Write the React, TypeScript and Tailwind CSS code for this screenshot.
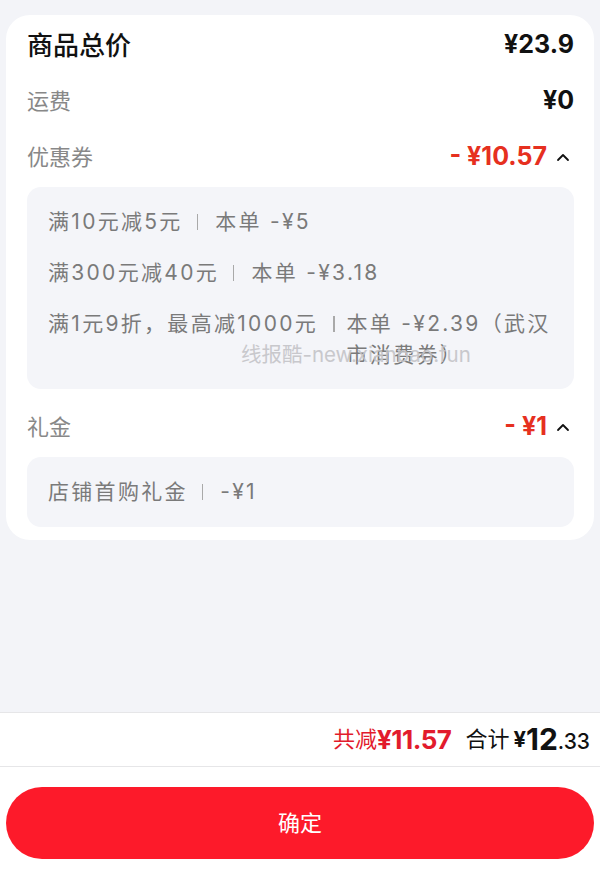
import React from "react";

function Chevron() {
  return (
    <svg width="14" height="10" viewBox="0 0 14 10" className="ml-[9px] mr-[4px]">
      <polyline points="2,8 7,3 12,8" fill="none" stroke="#111" strokeWidth="1.8" strokeLinecap="round" strokeLinejoin="round" />
    </svg>
  );
}

function Sep() {
  return <span className="ml-[14px] mr-[17px] inline-block h-[16px] w-[1.5px] shrink-0 bg-[#a9a9a9]" />;
}

export default function App() {
  const font = { fontFamily: 'Inter, "Noto Sans CJK SC", "Noto Sans", sans-serif' };
  return (
    <div className="flex h-[881px] w-[600px] flex-col bg-[#f3f4f8]" style={font}>
      <div className="flex-1 px-[6px] pt-[15px]">
        <div className="relative rounded-[24px] bg-white pb-[13px] pl-[21px] pr-[20px] pt-[2px]">
          <div className="flex h-[56px] items-center justify-between">
            <span className="text-[26px] font-medium text-[#111]">商品总价</span>
            <span className="text-[25px] font-bold text-[#111]">¥23.9</span>
          </div>
          <div className="flex h-[56px] items-center justify-between">
            <span className="text-[22px] text-[#888]">运费</span>
            <span className="text-[25px] font-bold text-[#111]">¥0</span>
          </div>
          <div className="flex h-[56px] items-center justify-between">
            <span className="text-[22px] text-[#888]">优惠券</span>
            <span className="flex items-center">
              <span className="text-[25px] font-bold text-[#e6301f]">-&nbsp;¥10.57</span>
              <Chevron />
            </span>
          </div>
          <div className="mt-[2px] flex flex-col gap-[20px] rounded-[14px] bg-[#f4f5f9] px-[21px] py-[19px] text-[21px] leading-[31px] tracking-[2.3px] text-[#7a7a7a]">
            <div className="flex items-center">
              <span className="whitespace-nowrap">满10元减5元</span>
              <Sep />
              <span className="whitespace-nowrap">本单 -¥5</span>
            </div>
            <div className="flex items-center">
              <span className="whitespace-nowrap">满300元减40元</span>
              <Sep />
              <span className="whitespace-nowrap">本单 -¥3.18</span>
            </div>
            <div className="flex items-start">
              <span className="whitespace-nowrap">满1元9折，最高减1000元</span>
              <span className="flex h-[31px] items-center">
                <span className="ml-[15px] mr-[12px] inline-block h-[16px] w-[1.5px] bg-[#a9a9a9]" />
              </span>
              <span className="whitespace-nowrap">
                本单 -¥2.39（武汉
                <br />
                市消费券）
              </span>
            </div>
          </div>
          <div className="mt-[10px] flex h-[56px] items-center justify-between">
            <span className="text-[22px] text-[#888]">礼金</span>
            <span className="flex items-center">
              <span className="text-[25px] font-bold text-[#e6301f]">-&nbsp;¥1</span>
              <Chevron />
            </span>
          </div>
          <div className="mt-[2px] flex h-[70px] items-center rounded-[14px] bg-[#f4f5f9] px-[21px] text-[21px] tracking-[2.3px] text-[#7a7a7a]">
            <span>店铺首购礼金</span>
            <Sep />
            <span>-¥1</span>
          </div>
          <div className="pointer-events-none absolute left-[235px] top-[325px] whitespace-nowrap text-[20.5px] text-[#c4c4c8] opacity-90">
            线报酷-new.xianbao.fun
          </div>
        </div>
      </div>
      <div className="flex h-[55px] items-center justify-end border-y border-[#e6e6e8] bg-white pr-[10px]">
        <span className="text-[22px] text-[#e21b2c]">共减</span>
        <span className="text-[26px] font-bold tracking-[-0.5px] text-[#e21b2c]">¥11.57</span>
        <span className="ml-[14px] text-[22px] text-[#111]">合计</span>
        <span className="ml-[4px] text-[22px] font-bold text-[#111]">¥</span>
        <span className="text-[30px] font-bold text-[#111]">12</span>
        <span className="mt-[5px] text-[21px] font-medium text-[#111]">.33</span>
      </div>
      <div className="h-[114px] bg-white px-[6px] pt-[20px]">
        <button className="flex h-[72px] w-full items-center justify-center rounded-full bg-[#fd1a2a] text-[22px] text-white">
          确定
        </button>
      </div>
    </div>
  );
}
